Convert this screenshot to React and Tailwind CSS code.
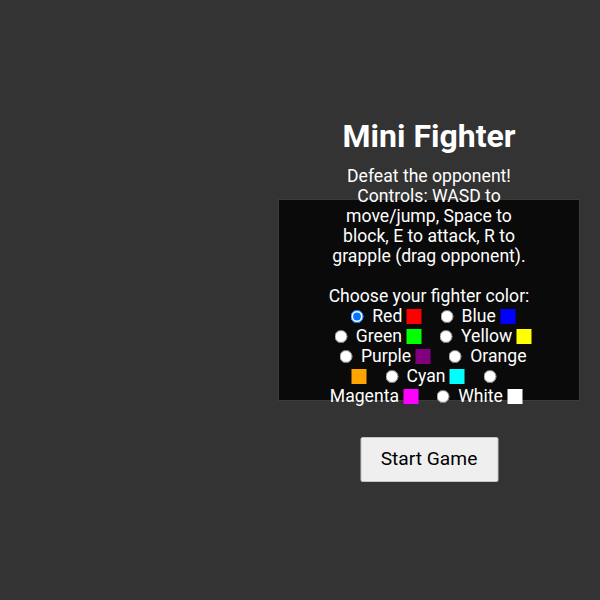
import React, { useState } from 'react';

const colors = [
    { name: 'Red', hex: '#ff0000' },
    { name: 'Blue', hex: '#0000ff' },
    { name: 'Green', hex: '#00ff00' },
    { name: 'Yellow', hex: '#ffff00' },
    { name: 'Purple', hex: '#800080' },
    { name: 'Orange', hex: '#ffa500' },
    { name: 'Cyan', hex: '#00ffff' },
    { name: 'Magenta', hex: '#ff00ff' },
    { name: 'White', hex: '#ffffff' },
];

function App() {
    const [color, setColor] = useState('Red');

    return (
        <div className="h-screen w-full bg-[#333333] flex items-center justify-end pr-5 font-['Roboto','Liberation_Sans',sans-serif]">
            <div className="relative">
                {/* game canvas */}
                <div className="w-[302px] h-[202px] bg-[#0a0a0a] border border-[#3c3c3c]"></div>

                {/* menu over the canvas */}
                <div className="absolute left-1/2 top-1/2 -translate-x-1/2 -translate-y-1/2 w-[213px] flex flex-col items-center text-center text-white">
                    <h1 className="text-[32px] font-bold leading-[37px] mb-[11px]">Mini Fighter</h1>
                    <p className="text-[17.6px] leading-[20px]">
                        Defeat the opponent! Controls: WASD to move/jump, Space to block, E to attack, R to grapple (drag opponent).
                    </p>
                    <p className="text-[17.6px] leading-[20px] mt-[20px]">Choose your fighter color:</p>
                    <div className="w-[219px] pr-[6px] shrink-0 text-[17.6px] leading-[20px]">
                        {colors.map(c => (
                            <React.Fragment key={c.name}>
                                <label>
                                    <input type="radio"
                                        name="color"
                                        value={c.name}
                                        checked={color === c.name}
                                        onChange={() => setColor(c.name)}
                                        className="appearance-auto align-[-1px] ml-[14px] mr-[4px] w-[13px] h-[13px]" />
                                    {' '}{c.name}{' '}<span className="inline-block w-[15px] h-[15px] align-[-2px]" style={{ backgroundColor: c.hex }}></span>
                                </label>{' '}
                            </React.Fragment>
                        ))}
                    </div>
                    <button className="mt-[31px] w-[138px] h-[45px] bg-[#efefef] border border-[#c4c4c4] rounded-[2px] text-black text-[19.2px]">
                        Start Game
                    </button>
                </div>
            </div>
        </div>
    );
}

export default App;
